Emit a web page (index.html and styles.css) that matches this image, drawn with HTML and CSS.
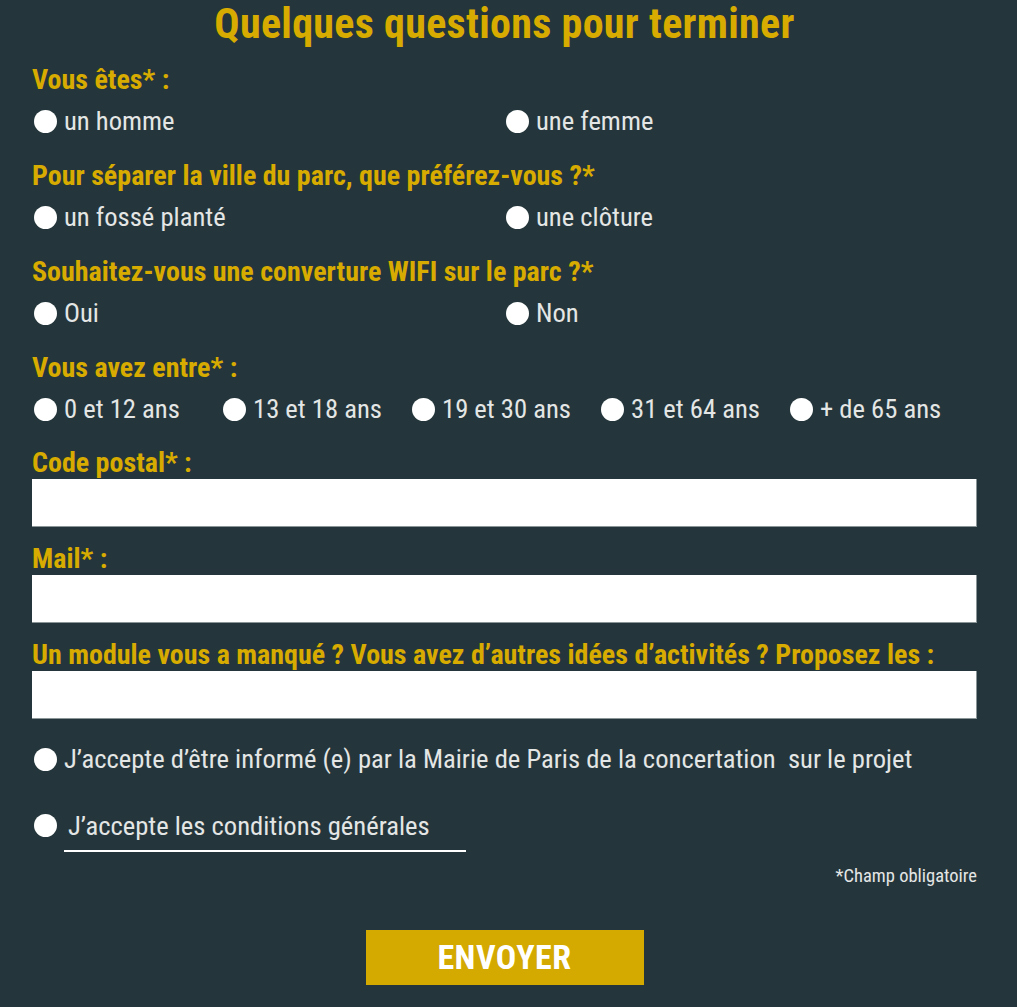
FILE: index.html
```html
<!DOCTYPE html>
<html lang="fr">
<head>
<meta charset="utf-8">
<title>Quelques questions pour terminer</title>
<link rel="stylesheet" href="styles.css">
</head>
<body>
<form class="form">
  <h1 class="title">Quelques questions pour terminer</h1>

  <div class="section">
    <div class="label">Vous êtes* :</div>
    <div class="options two">
      <label class="opt"><span class="dot"></span>un homme</label>
      <label class="opt"><span class="dot"></span>une femme</label>
    </div>
  </div>

  <div class="section">
    <div class="label">Pour séparer la ville du parc, que préférez-vous ?*</div>
    <div class="options two">
      <label class="opt"><span class="dot"></span>un fossé planté</label>
      <label class="opt"><span class="dot"></span>une clôture</label>
    </div>
  </div>

  <div class="section">
    <div class="label">Souhaitez-vous une converture WIFI sur le parc ?*</div>
    <div class="options two">
      <label class="opt"><span class="dot"></span>Oui</label>
      <label class="opt"><span class="dot"></span>Non</label>
    </div>
  </div>

  <div class="section">
    <div class="label">Vous avez entre* :</div>
    <div class="options five">
      <label class="opt"><span class="dot"></span>0 et 12 ans</label>
      <label class="opt"><span class="dot"></span>13 et 18 ans</label>
      <label class="opt"><span class="dot"></span>19 et 30 ans</label>
      <label class="opt"><span class="dot"></span>31 et 64 ans</label>
      <label class="opt"><span class="dot"></span>+ de 65 ans</label>
    </div>
  </div>

  <div class="field first">
    <div class="label">Code postal* :</div>
    <div class="input"></div>
  </div>
  <div class="field">
    <div class="label">Mail* :</div>
    <div class="input"></div>
  </div>
  <div class="field">
    <div class="label">Un module vous a manqué ? Vous avez d’autres idées d’activités ? Proposez les :</div>
    <div class="input"></div>
  </div>

  <label class="opt check1"><span class="dot"></span>J’accepte d’être informé (e) par la Mairie de Paris de la concertation&nbsp; sur le projet</label>
  <label class="opt check2"><span class="dot"></span><span class="cgu">J’accepte les conditions générales</span></label>

  <div class="note">*Champ obligatoire</div>

  <div class="actions"><span class="btn">ENVOYER</span></div>
</form>
</body>
</html>
```

FILE: styles.css
```css
html, body {
  margin: 0;
  padding: 0;
  background: #24363b;
}
body {
  font-family: "Roboto Condensed", "Liberation Sans Narrow", Roboto, "DejaVu Sans Condensed", sans-serif;
  color: #e4e6e6;
  width: 1017px;
  height: 1007px;
  overflow: hidden;
}
.form {
  display: flex;
  flex-direction: column;
  padding: 0 40px 0 32px;
}
.title {
  margin: 0 0 20px;
  font-size: 42px;
  line-height: 48px;
  font-weight: bold;
  color: #d8ab00;
  text-align: center;
  letter-spacing: 0.3px;
}
.label {
  font-size: 28px;
  line-height: 24px;
  font-weight: bold;
  color: #d8ab00;
  white-space: nowrap;
}
.section {
  display: flex;
  flex-direction: column;
  gap: 14px;
  margin-bottom: 28px;
}
.options {
  display: grid;
}
.options.two {
  grid-template-columns: 472px 1fr;
}
.options.five {
  grid-template-columns: repeat(5, 189px);
}
.opt {
  display: flex;
  align-items: center;
  gap: 7px;
  height: 30px;
  line-height: 30px;
  font-size: 26.6px;
  color: #e4e6e6;
  white-space: nowrap;
}
.dot {
  flex: none;
  width: 23px;
  height: 23px;
  border-radius: 50%;
  background: #ffffff;
  margin-left: 2px;
}
.field {
  display: flex;
  flex-direction: column;
  gap: 4px;
  margin-bottom: 20px;
}
.field.first {
  margin-top: -1px;
}
.input {
  height: 48px;
  background: #ffffff;
  border-bottom: 1px solid #8a9598;
  border-right: 1px solid #8a9598;
  box-sizing: border-box;
}
.check1 {
  margin-top: 5px;
}
.check2 {
  margin-top: 36px;
}
.cgu {
  display: inline-block;
  padding: 0 0 9px 4px;
  width: 398px;
  line-height: 30px;
  border-bottom: 2px solid #ffffff;
  position: relative;
  top: 6px;
}
.note {
  margin-top: 26px;
  text-align: right;
  font-size: 18.5px;
  line-height: 20px;
  color: #e4e6e6;
}
.actions {
  display: flex;
  justify-content: center;
  margin-top: 44px;
}
.btn {
  width: 278px;
  height: 55px;
  background: #d4a900;
  color: #ffffff;
  font-weight: bold;
  font-size: 34px;
  line-height: 55px;
  text-align: center;
  letter-spacing: 0.5px;
}
```
